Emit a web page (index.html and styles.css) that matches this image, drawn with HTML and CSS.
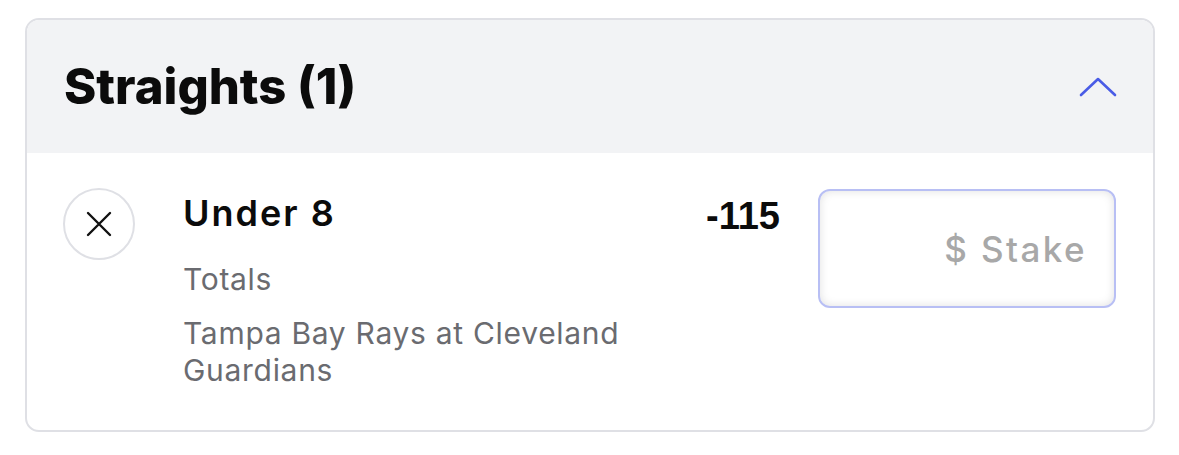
FILE: index.html
```html
<!DOCTYPE html>
<html lang="en">
<head>
  <meta charset="UTF-8" />
  <title>Bet Slip</title>
  <link rel="stylesheet" href="styles.css">
</head>
<body>

  <div class="slip-card">
    <div class="slip-header">
      <h2 class="slip-title">Straights (1)</h2>
      <button class="toggle-btn" aria-label="Collapse">
        <svg width="38" height="20" viewBox="0 0 38 20" fill="none">
          <path d="M2 18 L19 2 L36 18" stroke="#4a5ce6" stroke-width="2.6" stroke-linecap="round" stroke-linejoin="round"/>
        </svg>
      </button>
    </div>

    <div class="slip-row">
      <button class="remove-btn" aria-label="Remove">
        <svg width="26" height="26" viewBox="0 0 26 26" fill="none">
          <path d="M2 2 L24 24 M24 2 L2 24" stroke="#111" stroke-width="2.4" stroke-linecap="round"/>
        </svg>
      </button>
      <div class="bet-info">
        <p class="selection">Under 8</p>
        <p class="market">Totals</p>
        <p class="event">Tampa Bay Rays at Cleveland Guardians</p>
      </div>
      <div class="odds">-115</div>
      <input class="stake-input" type="text" placeholder="$ Stake" />
    </div>
  </div>

</body>
</html>
```

FILE: styles.css
```css
* {
  box-sizing: border-box;
}

body {
  margin: 0;
  padding: 18px 25px;
  background: #fff;
  font-family: Inter, "Noto Sans", sans-serif;
}

.slip-card {
  width: 1130px;
  border: 2px solid #dfe0e5;
  border-radius: 14px;
  overflow: hidden;
}

.slip-header {
  display: flex;
  align-items: center;
  justify-content: space-between;
  height: 133px;
  padding: 0 36px 0 37px;
  background: #f2f3f5;
}

.slip-title {
  margin: 0;
  font-size: 49px;
  font-weight: 800;
  color: #0b0b0b;
  line-height: 60px;
}

.toggle-btn,
.remove-btn {
  border: none;
  background: none;
  padding: 0;
  cursor: pointer;
  display: flex;
  align-items: center;
  justify-content: center;
}

.slip-row {
  display: flex;
  align-items: flex-start;
  padding: 35px 37px 41px 36px;
}

.remove-btn {
  flex: 0 0 72px;
  width: 72px;
  height: 72px;
  border: 2px solid #dfe0e5;
  border-radius: 50%;
  background: #fff;
}

.bet-info {
  flex: 1;
  margin-left: 48px;
  margin-right: 40px;
}

.bet-info p {
  margin: 0;
}

.selection {
  font-size: 36px;
  font-weight: 600;
  letter-spacing: 2px;
  color: #0b0b0b;
  line-height: 44px;
  margin-top: 3px !important;
}

.market,
.event {
  font-size: 30px;
  letter-spacing: 0.7px;
  color: #6a6b70;
  line-height: 37px;
}

.market {
  margin-top: 26px !important;
  margin-bottom: 17px !important;
}

.odds {
  font-family: "Liberation Sans", Arial, sans-serif;
  font-size: 38px;
  font-weight: 700;
  color: #0b0b0b;
  line-height: 44px;
  margin-top: 6px;
  margin-right: 38px;
}

.stake-input {
  width: 298px;
  height: 119px;
  border: 2px solid #b8bff4;
  border-radius: 12px;
  box-shadow: inset 0 0 10px rgba(0,0,0,0.12);
  padding: 0 27px;
  text-align: right;
  font-family: Inter, "Noto Sans", sans-serif;
  font-size: 35px;
  font-weight: 500;
  letter-spacing: 2.4px;
  outline: none;
  margin-top: 1px;
}

.stake-input::placeholder {
  color: #a8a8a8;
}
```
